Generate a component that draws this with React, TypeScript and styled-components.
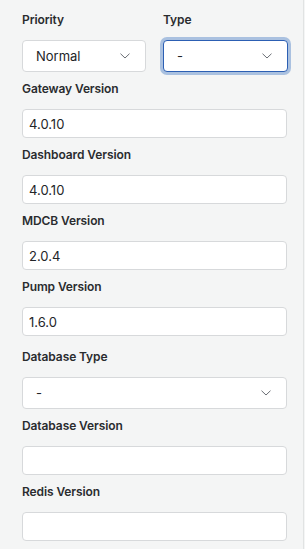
import React from 'react';
import styled, { createGlobalStyle } from 'styled-components';

const GlobalStyle = createGlobalStyle`
  html, body {
    margin: 0;
    padding: 0;
    background-color: #F4F5F5;
  }

  body {
    font-family: Inter, "Noto Sans", "Liberation Sans", sans-serif;
    color: #232528;
  }
`;

const Panel = styled.div`
  width: 304px;
  min-height: 549px;
  box-sizing: border-box;
  padding: 12px 16px 8px 22px;
  background-color: #F4F5F5;
  border-right: 1px solid #E1E3E3;
  display: flex;
  flex-direction: column;
  gap: 9px;
`;

const Row = styled.div`
  display: grid;
  grid-template-columns: 124px 125px;
  column-gap: 17px;
`;

const Field = styled.div<{ $extraTop?: number }>`
  display: flex;
  flex-direction: column;
  margin-top: ${({ $extraTop }) => $extraTop ?? 0}px;
`;

const Label = styled.label`
  font-size: 12px;
  font-weight: 600;
  letter-spacing: -0.1px;
  line-height: 16px;
  color: #2A2C2F;
  margin-bottom: 12px;
`;

const TextInput = styled.input`
  height: 29px;
  box-sizing: border-box;
  width: 100%;
  padding: 0 6px;
  border: 1px solid #D7D9DB;
  border-radius: 4px;
  background-color: #FFFFFF;
  font-family: inherit;
  font-size: 13px;
  color: #232528;
  outline: none;
`;

const SelectBox = styled.div<{ $focused?: boolean }>`
  height: 32px;
  box-sizing: border-box;
  display: flex;
  align-items: center;
  justify-content: space-between;
  padding: 0 15px 0 13px;
  background-color: #FFFFFF;
  border: 1px solid ${({ $focused }) => ($focused ? '#2C5FB3' : '#D7D9DB')};
  border-radius: 4px;
  box-shadow: ${({ $focused }) => ($focused ? '0 0 0 3px rgba(80, 130, 200, 0.45)' : 'none')};
  font-size: 13px;
  color: #232528;
  cursor: pointer;
`;

const Chevron = () => (
  <svg width="10" height="6" viewBox="0 0 10 6" fill="none">
    <path d="M0.5 0.7 L5 5 L9.5 0.7" stroke="#6A6E74" strokeWidth="1" />
  </svg>
);

const Select: React.FC<{ value: string; focused?: boolean }> = ({ value, focused }) => (
  <SelectBox $focused={focused} role="combobox">
    <span>{value}</span>
    <Chevron />
  </SelectBox>
);

const versions = [
  { label: 'Gateway Version', value: '4.0.10' },
  { label: 'Dashboard Version', value: '4.0.10' },
  { label: 'MDCB Version', value: '2.0.4' },
  { label: 'Pump Version', value: '1.6.0' },
];

const App: React.FC = () => {
  return (
    <>
      <GlobalStyle />
      <Panel>
        <Row>
          <Field>
            <Label>Priority</Label>
            <Select value="Normal" />
          </Field>
          <Field>
            <Label>Type</Label>
            <Select value="-" focused />
          </Field>
        </Row>
        {versions.map(v => (
          <Field key={v.label}>
            <Label>{v.label}</Label>
            <TextInput defaultValue={v.value} />
          </Field>
        ))}
        <Field $extraTop={4}>
          <Label>Database Type</Label>
          <Select value="-" />
        </Field>
        <Field>
          <Label>Database Version</Label>
          <TextInput defaultValue="" />
        </Field>
        <Field>
          <Label>Redis Version</Label>
          <TextInput defaultValue="" />
        </Field>
      </Panel>
    </>
  );
};

export default App;
